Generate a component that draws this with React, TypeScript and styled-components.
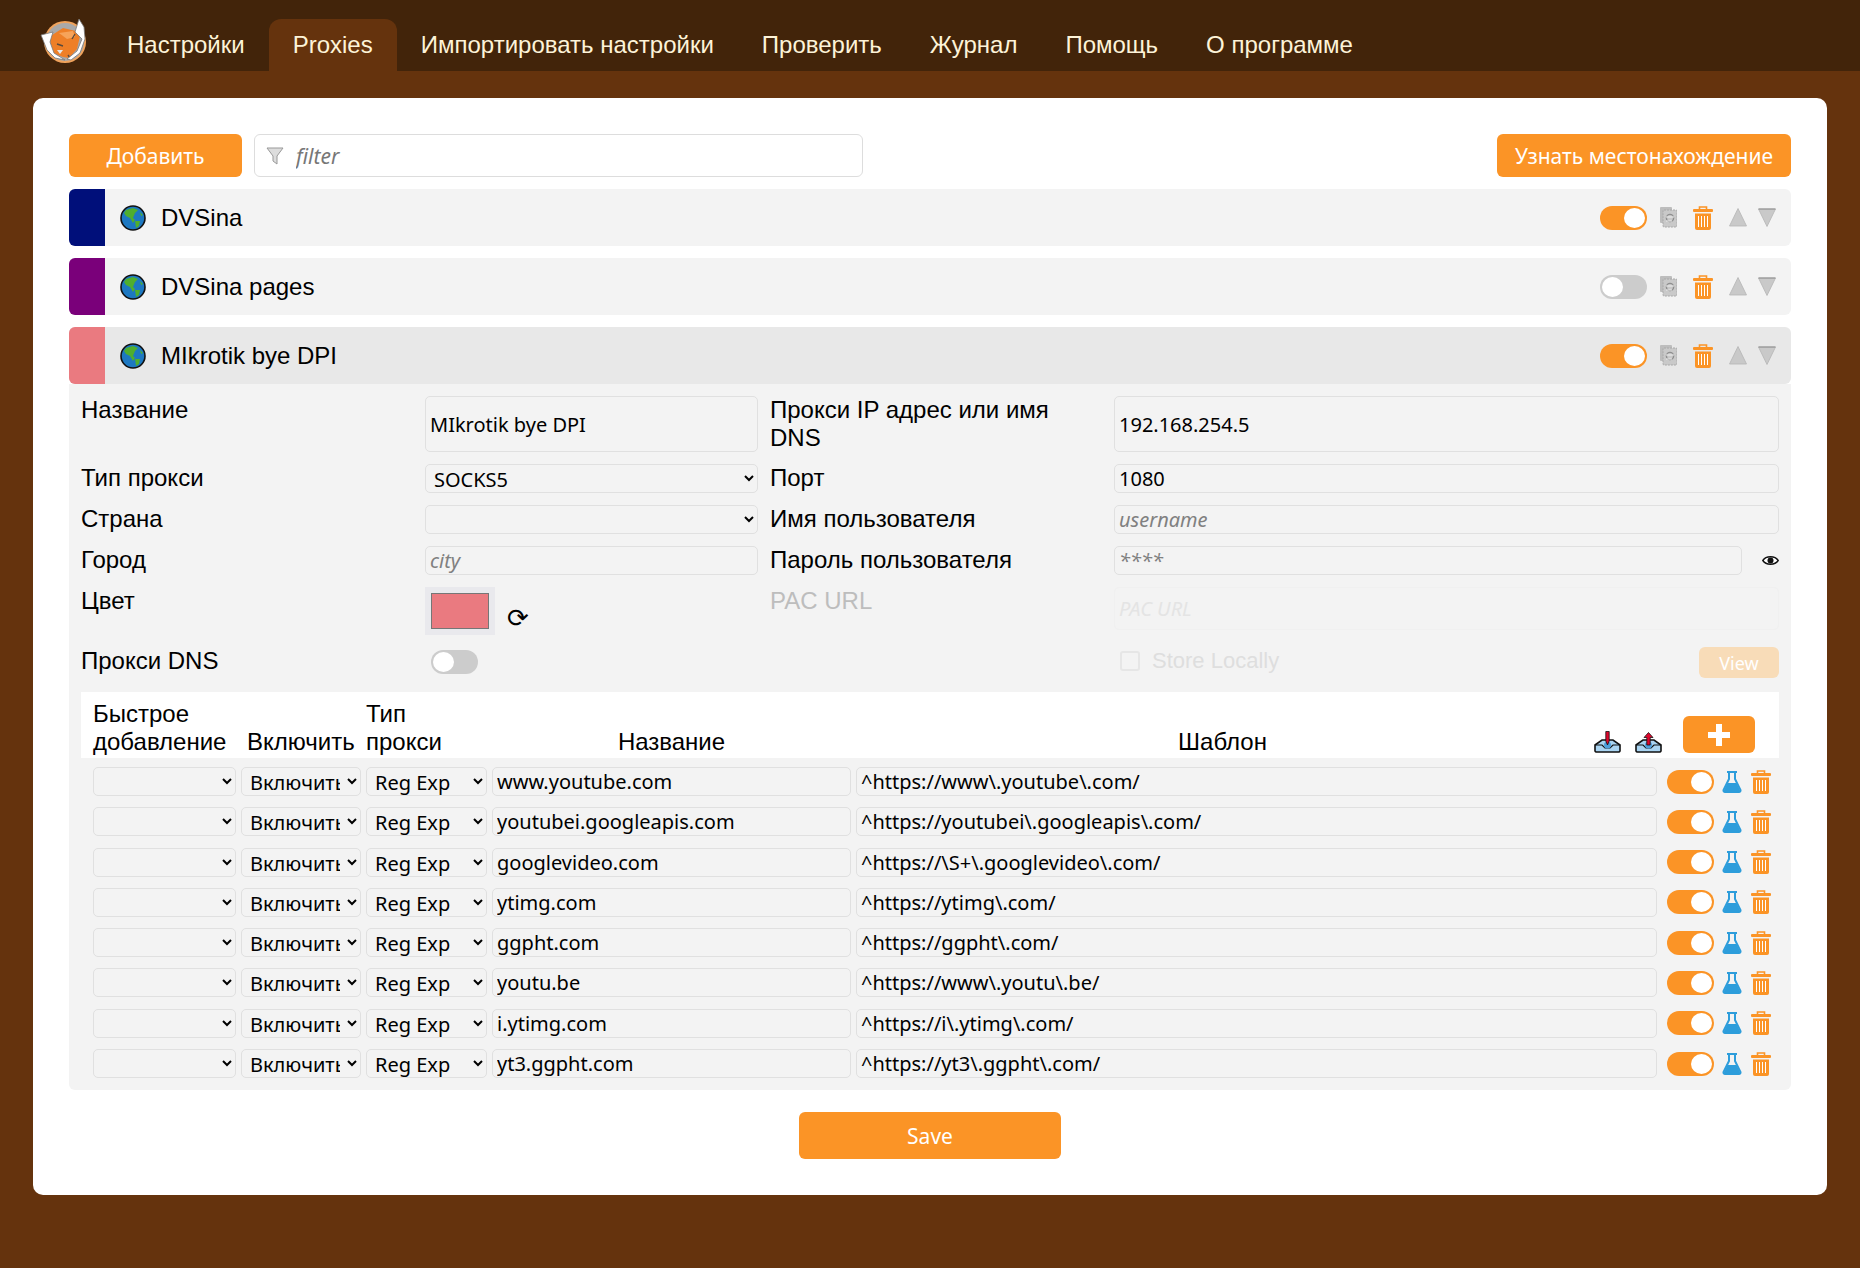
import React from 'react';
import styled, { createGlobalStyle } from 'styled-components';

const ORANGE = '#fb9426';
const BROWN = '#65330d';

const GlobalStyle = createGlobalStyle`
  html, body {
    margin: 0;
    min-height: 100%;
    background: ${BROWN};
    font-family: 'Liberation Sans', Arial, sans-serif;
    font-size: 24px;
    color: #000;
  }
  * { box-sizing: border-box; }
`;

const Nav = styled.nav`
  display: flex;
  align-items: flex-end;
  height: 71px;
  background: #42240a;
`;

const LogoWrap = styled.div`
  width: 103px;
  height: 71px;
  padding: 17px 0 0 39px;
  flex: none;
`;

const Tab = styled.a<{ $active?: boolean }>`
  display: block;
  height: 52px;
  padding: 12px 24px 0;
  font-size: 24px;
  line-height: 28px;
  color: #fdf3d8;
  border-radius: 12px 12px 0 0;
  background: ${p => (p.$active ? BROWN : 'transparent')};
`;

const Card = styled.main`
  margin: 27px 33px 72px;
  padding: 36px 36px 36px;
  background: #fff;
  border-radius: 10px;
`;

const Toolbar = styled.div`
  display: flex;
  align-items: stretch;
  gap: 12px;
  height: 43px;
  margin-bottom: 12px;
`;

const Button = styled.button<{ $wide?: number }>`
  border: 0;
  border-radius: 6px;
  background: ${ORANGE};
  color: #fff;
  font-family: 'Noto Sans', sans-serif;
  font-size: 21px;
  width: ${p => (p.$wide ? `${p.$wide}px` : 'auto')};
  padding: 0;
`;

const FilterBox = styled.div`
  position: relative;
  width: 609px;
  margin-right: auto;
`;

const FilterIcon = styled.svg`
  position: absolute;
  left: 12px;
  top: 13px;
`;

const FilterInput = styled.input`
  width: 100%;
  height: 100%;
  padding: 0 0 0 41px;
  border: 1px solid #ddd;
  border-radius: 6px;
  background: #fff;
  font-family: 'Noto Sans', sans-serif;
  font-size: 21px;
  font-style: italic;
  &::placeholder { color: #777; opacity: 1; }
`;

const ProxyRow = styled.div<{ $open?: boolean }>`
  display: flex;
  align-items: center;
  height: 57px;
  margin-bottom: ${p => (p.$open ? 0 : '12px')};
  background: ${p => (p.$open ? '#e8e8e8' : '#f3f3f3')};
  border-radius: 6px;
  overflow: hidden;
`;

const ColorBar = styled.div<{ $color: string }>`
  width: 36px;
  align-self: stretch;
  background: ${p => p.$color};
  flex: none;
`;

const GlobeWrap = styled.div`
  display: flex;
  margin: 0 15px;
`;

const ProxyName = styled.div`
  flex: 1;
  font-size: 24px;
`;

const RowActions = styled.div`
  display: flex;
  align-items: center;
  margin-right: 15px;
`;

const ToggleTrack = styled.div<{ $on?: boolean }>`
  position: relative;
  width: 47px;
  height: 24px;
  border-radius: 12px;
  background: ${p => (p.$on ? ORANGE : '#ccc')};
  flex: none;
`;

const ToggleKnob = styled.span<{ $on?: boolean }>`
  position: absolute;
  top: 2px;
  left: ${p => (p.$on ? '24px' : '2px')};
  width: 21px;
  height: 20px;
  border-radius: 50%;
  background: #fff;
`;

const ActionIcon = styled.svg<{ $left: number }>`
  display: block;
  margin-left: ${p => p.$left}px;
  flex: none;
`;

const Panel = styled.section`
  padding: 12px 12px 12px;
  background: #f3f3f3;
  border-radius: 0 0 6px 6px;
`;

const FormGrid = styled.div`
  display: grid;
  grid-template-columns: 332px 333px 332px 665px;
  column-gap: 12px;
  row-gap: 12px;
  margin-bottom: 12px;
`;

const Label = styled.label<{ $muted?: boolean }>`
  font-size: 24px;
  line-height: 28px;
  color: ${p => (p.$muted ? '#bdbdbd' : '#000')};
`;

const fieldCss = `
  width: 100%;
  border: 1px solid #e0e0e0;
  border-radius: 5px;
  background: #f3f3f3;
  color: #000;
  font-family: 'Noto Sans', sans-serif;
  font-size: 20px;
  padding: 0 4px;
  outline: 0;
  &::placeholder { color: #808080; font-style: italic; opacity: 1; }
`;

const TextField = styled.input<{ $height?: number }>`
  ${fieldCss}
  display: block;
  height: ${p => p.$height || 29}px;
`;

const SelectField = styled.select`
  ${fieldCss}
  display: block;
  height: 29px;
  appearance: auto;
`;

const PasswordLine = styled.div`
  display: flex;
  align-items: center;
  justify-content: space-between;
`;

const PasswordInput = styled(TextField)`
  width: 628px;
`;

const ColorLine = styled.div`
  display: flex;
  align-items: flex-end;
  height: 48px;
`;

const Swatch = styled.div`
  width: 70px;
  height: 48px;
  padding: 6px;
  background: #e9e9ed;
`;

const SwatchFill = styled.div<{ $color: string }>`
  height: 36px;
  background: ${p => p.$color};
  border: 1px solid #767676;
`;

const RefreshGlyph = styled.span`
  margin-left: 12px;
  font-family: 'DejaVu Sans', sans-serif;
  font-size: 26px;
  line-height: 34px;
`;

const DisabledField = styled(TextField)`
  border-color: #f0f0f0;
  &::placeholder { color: #e4e4e4; }
`;

const StoreLine = styled.div`
  display: flex;
  align-items: flex-start;
  justify-content: space-between;
  height: 33px;
`;

const StoreLabel = styled.div`
  display: flex;
  align-items: center;
  padding-left: 6px;
  height: 28px;
  color: #dedede;
  font-size: 22px;
`;

const FakeCheck = styled.span`
  width: 20px;
  height: 20px;
  margin-right: 12px;
  border: 2px solid #e6e6e6;
  border-radius: 3px;
`;

const ViewButton = styled(Button)`
  width: 80px;
  height: 31px;
  background: #f8dcb8;
  font-size: 18px;
`;

const DnsCell = styled.div`
  padding: 3px 0 0 6px;
`;

const TableHead = styled.div`
  display: grid;
  grid-template-columns: 143px 120px 121px 359px 1fr auto;
  column-gap: 5px;
  align-items: end;
  height: 66px;
  padding: 0 24px 0 12px;
  background: #fff;
  margin-bottom: 9px;
`;

const HeadCell = styled.div<{ $center?: boolean; $inset?: number }>`
  font-size: 24px;
  line-height: 28px;
  padding-bottom: 2px;
  padding-left: ${p => p.$inset || 0}px;
  text-align: ${p => (p.$center ? 'center' : 'left')};
`;

const HeadTools = styled.div`
  display: flex;
  align-items: flex-end;
  height: 37px;
  margin-bottom: 5px;
`;

const AddButton = styled(Button)`
  display: flex;
  align-items: center;
  justify-content: center;
  width: 72px;
  height: 37px;
  margin-left: 21px;
`;

const PatternRow = styled.div`
  display: grid;
  grid-template-columns: 143px 120px 121px 359px 801px 52px 23px 24px;
  column-gap: 5px;
  align-items: center;
  height: 29px;
  margin: 0 0 11.3px 12px;
  &:last-child { margin-bottom: 0; }
`;

const EndCell = styled.div`
  display: flex;
  justify-content: flex-end;
`;

const SaveWrap = styled.div`
  display: flex;
  justify-content: center;
  margin-top: 22px;
`;

const SaveButton = styled(Button)`
  width: 262px;
  height: 47px;
`;

const Logo = () => (
  <svg width="50" height="48" viewBox="0 0 50 48">
    <circle cx="26" cy="25" r="21" fill="#f0a35c" />
    <circle cx="26" cy="25" r="19" fill="#a9a9a9" />
    <path d="M10 20 L24 11 L37 14 L41 19 L38 32 L30 41 L24 40 L14 36 Z" fill="#ee7f27" />
    <path d="M20 16 L34 14 L36 20 L28 22 Z" fill="#f6a35a" />
    <path d="M18 27 L24 29 M33 22 L36 17 M29 38 L31 41" stroke="#5a4a3c" strokeWidth="1.4" fill="none" />
    <path d="M18 33 L24 33 L21 37 Z" fill="#e6e6e6" />
    <path d="M2 18 L14 15 L11 25 L15 36 L26 43 L16 41 L8 33 Z" fill="#fff" stroke="#777" strokeWidth="0.8" />
    <path d="M36 15 L40 2 L45 10 L46 22 L41 36 L32 43 L28 42 L38 34 L43 22 Z" fill="#fff" stroke="#777" strokeWidth="0.8" />
  </svg>
);

const Globe = () => (
  <svg width="26" height="26" viewBox="0 0 26 26">
    <circle cx="13" cy="13" r="12" fill="#1d78c1" stroke="#111" strokeWidth="1.6" />
    <path d="M6 5 L13 3 L18 5 L15 8 L13 13 L15 15 L13 18 L10 13 L6 11 L4 8 Z" fill="#4fae2e" />
    <path d="M15 16 L20 16 L19 21 L16 23 Z" fill="#4fae2e" />
    <path d="M20 7 L23 10 L21 11 Z" fill="#4fae2e" />
  </svg>
);

const Trash = ({ left, w = 20, h = 24 }: { left: number; w?: number; h?: number }) => (
  <ActionIcon $left={left} width={w} height={h} viewBox="0 0 20 24">
    <path d="M6.5 3 V1 H13.5 V3" fill="none" stroke={ORANGE} strokeWidth="1.6" />
    <rect x="0" y="3" width="20" height="3" rx="1" fill={ORANGE} />
    <path d="M2 7.5 H18 V22 a2 2 0 0 1 -2 2 H4 a2 2 0 0 1 -2 -2 Z" fill={ORANGE} />
    <path d="M5.5 10 V21 M8.5 10 V21 M11.5 10 V21 M14.5 10 V21" stroke="#fff" strokeWidth="1" />
  </ActionIcon>
);

const CopyIcon = () => (
  <ActionIcon $left={13} width="17" height="21" viewBox="0 0 17 21">
    <rect x="0" y="0" width="12" height="16" rx="1" fill="#bdbdbd" />
    <rect x="3" y="3" width="14" height="17" rx="1" fill="#c9c9c9" stroke="#a8a8a8" strokeDasharray="2 1" />
    <circle cx="10" cy="11" r="3.6" fill="none" stroke="#8f8f8f" strokeWidth="1.4" />
    <path d="M6 10 H14 M6 14 H12" stroke="#eee" strokeWidth="1" />
  </ActionIcon>
);

const Arrow = ({ up, left }: { up?: boolean; left: number }) => (
  <ActionIcon $left={left} width="18" height="19" viewBox="0 0 18 19">
    <polygon
      points={up ? '9,0.5 17.5,18 0.5,18' : '0.5,1 17.5,1 9,18.5'}
      fill="#c9c9c9"
      stroke="#b5b5b5"
      strokeWidth="0.8"
    />
    {!up && <path d="M0.5 1 H17.5" stroke="#8c8c8c" strokeWidth="1.2" />}
  </ActionIcon>
);

const Flask = () => (
  <svg width="20" height="22" viewBox="0 0 20 22">
    <path d="M5 1 H15 M7 1.5 V8 L1.5 19 a1.6 1.6 0 0 0 1.5 2 H17 a1.6 1.6 0 0 0 1.5 -2 L13 8 V1.5" fill="none" stroke="#2d9ddb" strokeWidth="2" />
    <path d="M5.5 12 H14.5 L18.5 20.5 H1.5 Z" fill="#2d9ddb" />
  </svg>
);

const TrayIcon = ({ up, left }: { up?: boolean; left: number }) => (
  <ActionIcon $left={left} width="27" height="22" viewBox="0 0 27 22">
    <path d="M1 14 L8 9 H19 L26 14 V20 a1.5 1.5 0 0 1 -1.5 1 H2.5 a1.5 1.5 0 0 1 -1.5 -1 Z" fill="#a9d4f2" stroke="#111" strokeWidth="1.6" />
    <path d="M1 14 H8 L11 17 H16 L19 14 H26" fill="none" stroke="#111" strokeWidth="1.2" />
    <circle cx="13.5" cy="14" r="3.5" fill="#4f9fdc" />
    {up ? (
      <path d="M13.5 1.5 L18 6.5 H15.2 V14 H11.8 V6.5 H9 Z" fill="#e0062c" stroke="#111" strokeWidth="0.8" />
    ) : (
      <path d="M11.8 0.5 H15.2 V10 L13.5 14 L11.8 10 Z" fill="#e0062c" stroke="#111" strokeWidth="0.8" />
    )}
  </ActionIcon>
);

const Eye = () => (
  <svg width="17" height="11" viewBox="0 0 17 11">
    <path d="M0.8 5.5 C4 0.5 13 0.5 16.2 5.5 C13 10.5 4 10.5 0.8 5.5 Z" fill="#fff" stroke="#111" strokeWidth="1.4" />
    <circle cx="8.5" cy="5.5" r="3" fill="#111" />
  </svg>
);

const Toggle = ({ on }: { on?: boolean }) => (
  <ToggleTrack $on={on}>
    <ToggleKnob $on={on} />
  </ToggleTrack>
);

const proxies = [
  { name: 'DVSina', color: '#000f7a', on: true },
  { name: 'DVSina pages', color: '#7a007a', on: false },
  { name: 'MIkrotik bye DPI', color: '#ea7a80', on: true, open: true }
];

const patterns = [
  ['www.youtube.com', '^https://www\\.youtube\\.com/'],
  ['youtubei.googleapis.com', '^https://youtubei\\.googleapis\\.com/'],
  ['googlevideo.com', '^https://\\S+\\.googlevideo\\.com/'],
  ['ytimg.com', '^https://ytimg\\.com/'],
  ['ggpht.com', '^https://ggpht\\.com/'],
  ['youtu.be', '^https://www\\.youtu\\.be/'],
  ['i.ytimg.com', '^https://i\\.ytimg\\.com/'],
  ['yt3.ggpht.com', '^https://yt3\\.ggpht\\.com/']
];

const tabs = ['Настройки', 'Proxies', 'Импортировать настройки', 'Проверить', 'Журнал', 'Помощь', 'О программе'];

const App = () => (
  <>
    <GlobalStyle />
    <Nav>
      <LogoWrap>
        <Logo />
      </LogoWrap>
      {tabs.map(tab => (
        <Tab key={tab} $active={tab === 'Proxies'}>
          {tab}
        </Tab>
      ))}
    </Nav>
    <Card>
      <Toolbar>
        <Button $wide={173}>Добавить</Button>
        <FilterBox>
          <FilterIcon width="18" height="18" viewBox="0 0 18 18">
            <path d="M1 1 H17 L11 9 V17 L7 14 V9 Z" fill="#ddd" stroke="#999" strokeWidth="1" />
          </FilterIcon>
          <FilterInput placeholder="filter" readOnly />
        </FilterBox>
        <Button $wide={294}>Узнать местонахождение</Button>
      </Toolbar>

      {proxies.map(proxy => (
        <ProxyRow key={proxy.name} $open={proxy.open}>
          <ColorBar $color={proxy.color} />
          <GlobeWrap>
            <Globe />
          </GlobeWrap>
          <ProxyName>{proxy.name}</ProxyName>
          <RowActions>
            <Toggle on={proxy.on} />
            <CopyIcon />
            <Trash left={16} />
            <Arrow up left={16} />
            <Arrow left={11} />
          </RowActions>
        </ProxyRow>
      ))}

      <Panel>
        <FormGrid>
          <Label>Название</Label>
          <TextField $height={56} defaultValue="MIkrotik bye DPI" />
          <Label>Прокси IP адрес или имя DNS</Label>
          <TextField $height={56} defaultValue="192.168.254.5" />

          <Label>Тип прокси</Label>
          <SelectField defaultValue="SOCKS5">
            <option>SOCKS5</option>
          </SelectField>
          <Label>Порт</Label>
          <TextField defaultValue="1080" />

          <Label>Страна</Label>
          <SelectField defaultValue="">
            <option value="" />
          </SelectField>
          <Label>Имя пользователя</Label>
          <TextField placeholder="username" />

          <Label>Город</Label>
          <TextField placeholder="city" />
          <Label>Пароль пользователя</Label>
          <PasswordLine>
            <PasswordInput placeholder="****" />
            <Eye />
          </PasswordLine>

          <Label>Цвет</Label>
          <ColorLine>
            <Swatch>
              <SwatchFill $color="#ea7a80" />
            </Swatch>
            <RefreshGlyph>⟳</RefreshGlyph>
          </ColorLine>
          <Label $muted>PAC URL</Label>
          <DisabledField $height={43} placeholder="PAC URL" disabled />

          <Label>Прокси DNS</Label>
          <DnsCell>
            <Toggle />
          </DnsCell>
          <span />
          <StoreLine>
            <StoreLabel>
              <FakeCheck />
              Store Locally
            </StoreLabel>
            <ViewButton>View</ViewButton>
          </StoreLine>
        </FormGrid>

        <TableHead>
          <HeadCell>Быстрое добавление</HeadCell>
          <HeadCell $inset={6}>Включить</HeadCell>
          <HeadCell>Тип прокси</HeadCell>
          <HeadCell $center>Название</HeadCell>
          <HeadCell $center>Шаблон</HeadCell>
          <HeadTools>
            <TrayIcon left={0} />
            <TrayIcon up left={14} />
            <AddButton aria-label="add">
              <svg width="24" height="24" viewBox="0 0 24 24">
                <path d="M12 1 V23 M1 12 H23" stroke="#fff" strokeWidth="6" />
              </svg>
            </AddButton>
          </HeadTools>
        </TableHead>

        {patterns.map(([title, regex]) => (
          <PatternRow key={title}>
            <SelectField defaultValue="">
              <option value="" />
            </SelectField>
            <SelectField defaultValue="Включить">
              <option>Включить</option>
            </SelectField>
            <SelectField defaultValue="Reg Exp">
              <option>Reg Exp</option>
            </SelectField>
            <TextField defaultValue={title} />
            <TextField defaultValue={regex} />
            <EndCell>
              <Toggle on />
            </EndCell>
            <EndCell>
              <Flask />
            </EndCell>
            <EndCell>
              <Trash left={0} />
            </EndCell>
          </PatternRow>
        ))}
      </Panel>

      <SaveWrap>
        <SaveButton>Save</SaveButton>
      </SaveWrap>
    </Card>
  </>
);

export default App;
